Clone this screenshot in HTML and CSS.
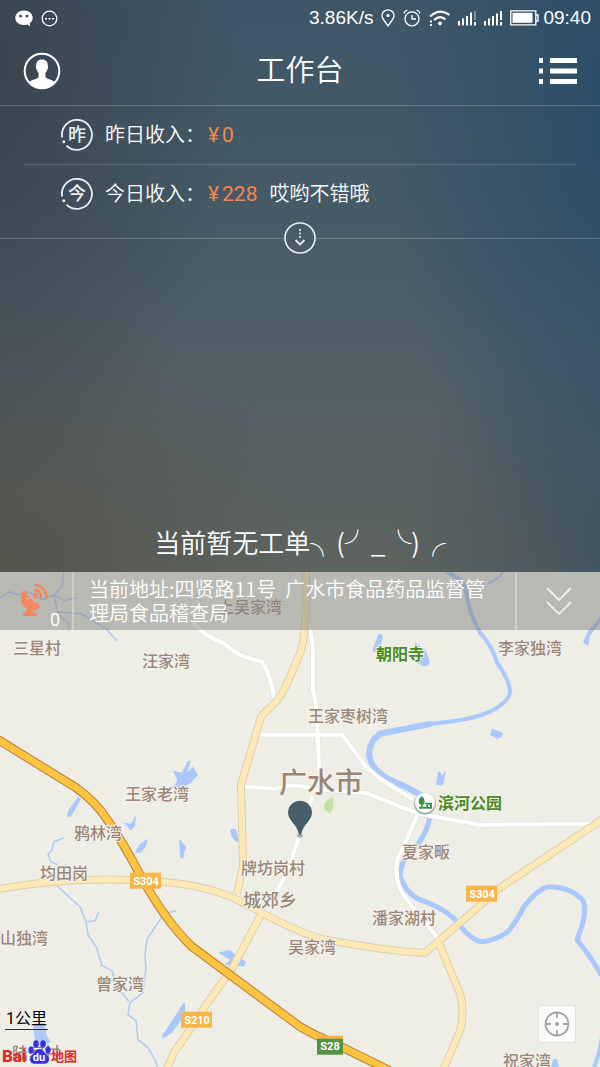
FILE: index.html
```html
<!DOCTYPE html>
<html lang="zh-CN">
<head>
    <meta charset="UTF-8">
    <meta name="viewport" content="width=device-width, initial-scale=1.0">
    <title>工作台</title>
    <link rel="stylesheet" href="styles.css">
</head>
<body>

<main class="workbench">
    <div class="status-bar">
        <div class="status-group">
            <svg width="18" height="17" viewBox="0 0 18 17">
                <path d="M9 0.5C4 .5 .3 3.6.3 7.8S4 15 9 15c1.400 0 2.700-.2 3.800-.6L15 16.500l-.2-3.200c1.800-1.300 2.900-3.300 2.900-5.500C17.700 3.600 14 .5 9 .5z" fill="#fff"/>
                <circle cx="5.600" cy="6" r="1.500" fill="#3d4b56"/>
                <circle cx="12" cy="6" r="1.500" fill="#3d4b56"/>
            </svg>
            <svg width="17" height="17" viewBox="0 0 17 17">
                <circle cx="8.500" cy="8.500" r="7.300" fill="none" stroke="#fff" stroke-width="1.300"/>
                <path d="M4 8h2v1.500H4zM7.500 8h2v1.500h-2zM11 8h2v1.500h-2z" fill="#fff"/>
            </svg>
        </div>
        <div class="status-group">
            <span>3.86K/s</span>
            <svg width="14" height="18" viewBox="0 0 14 18">
                <path d="M7 16.800C4.500 13 1 10 1 6.800a6 6 0 0 1 12 0C13 10 9.500 13 7 16.800z" fill="none" stroke="#fff" stroke-width="1.300"/>
                <circle cx="7" cy="6.500" r="1.600" fill="#fff"/>
            </svg>
            <svg width="18" height="18" viewBox="0 0 18 18">
                <circle cx="9" cy="9.800" r="7" fill="none" stroke="#fff" stroke-width="1.300"/>
                <path d="M9 6v4h4M1 4.500Q1.500 2 4.500 1M17 4.500Q16.500 2 13.500 1" fill="none" stroke="#fff" stroke-width="1.300"/>
            </svg>
            <svg width="21" height="17" viewBox="0 0 21 17">
                <path d="M1 6.500Q11 -2.500 20.500 5M5 10Q11 4.500 16.500 9.500" fill="none" stroke="#fff" stroke-width="2"/>
                <circle cx="11" cy="13.500" r="1.900" fill="#fff"/>
                <path d="M1 10.500h2v2H1zM1 14h2v2H1z" fill="#fff"/>
            </svg>
            <svg width="18" height="16" viewBox="0 0 18 16">
                <path d="M0 11h2v4.500H0zM4 8.500h2v7H4zM8 6h2v9.500H8zM12 2.500h2v13h-2zM16 12h2v3.500h-2z" fill="#fff"/>
                <path d="M16 1h2v9h-2z" fill="#fff" opacity=".35"/>
            </svg>
            <svg width="18" height="16" viewBox="0 0 18 16">
                <path d="M0 11h2v4.500H0zM4 8.500h2v7H4zM8 6h2v9.500H8zM12 3.500h2v12h-2zM16 1h2v9h-2zM16 12h2v3.500h-2z" fill="#fff"/>
            </svg>
            <span class="battery">
                <svg width="29" height="16" viewBox="0 0 29 16">
                    <path d="M.8.800h25v14h-25zM26 5h2v6h-2" fill="none" stroke="#fff" stroke-width="1.300"/>
                    <path d="M2.500 2.800h20v10h-20z" fill="#fff"/>
                </svg>
                09:40
            </span>
        </div>
    </div>

    <header class="header">
        <button class="icon-button" aria-label="个人中心">
            <svg width="38" height="38" viewBox="0 0 38 38">
                <circle cx="19" cy="19" r="17.300" fill="none" stroke="#fff" stroke-width="2"/>
                <path d="M19 7.500c-4 0-6 2.500-5.800 6.500-.7.500-.3 3 .6 3.600.3 1.600.9 2.700 1.800 3.500v4c-1.500 2.300-7 2.600-9.900 5.300A17.500 17.500 0 0 0 32.300 30.400c-2.900-2.700-8.400-3-9.900-5.300v-4c.9-.8 1.500-1.900 1.800-3.500.9-.6 1.300-3.100.6-3.600.2-4-1.800-6.500-5.800-6.500z" fill="#fff"/>
            </svg>
        </button>
        <h1>工作台</h1>
        <button class="icon-button" aria-label="菜单">
            <svg width="38" height="26" viewBox="0 0 38 26">
                <path d="M0 0h4v5H0zM11 0h27v5H11zM0 10.500h4v5H0zM11 10.500h27v5H11zM0 21h4v5H0zM11 21h27v5H11z" fill="#fff"/>
            </svg>
        </button>
    </header>

    <ul class="income">
        <li>
            <svg width="32" height="32" viewBox="0 0 32 32">
                <path d="M1.200 18.500A15 15 0 1 1 5.500 26.600" fill="none" stroke="#e8edf0" stroke-width="1.800"/>
                <circle cx="2.800" cy="22.800" r="1.500" fill="#e8edf0"/>
                <text class="badge-char" x="16" y="22">昨</text>
            </svg>
            <span class="amount">昨日收入：<b>¥</b><b>0</b></span>
        </li>
        <li>
            <svg width="32" height="32" viewBox="0 0 32 32">
                <path d="M1.200 18.500A15 15 0 1 1 5.500 26.600" fill="none" stroke="#e8edf0" stroke-width="1.800"/>
                <circle cx="2.800" cy="22.800" r="1.500" fill="#e8edf0"/>
                <text class="badge-char" x="16" y="22">今</text>
            </svg>
            <span class="amount">今日收入：<b>¥</b><b>228</b></span>
            <span>哎哟不错哦</span>
        </li>
    </ul>

    <div class="expand">
        <button class="icon-button" aria-label="展开">
            <svg width="32" height="32" viewBox="0 0 32 32">
                <circle cx="16" cy="16" r="15" fill="none" stroke="#e8edf0" stroke-width="1.600"/>
                <path d="M16 7v10" stroke="#e8edf0" stroke-width="1.600" stroke-dasharray="2 1.500"/>
                <path d="M11.500 18l4.500 4.500 4.500-4.500" fill="none" stroke="#e8edf0" stroke-width="1.800"/>
            </svg>
        </button>
    </div>

    <p class="empty">当前暂无工单╮(╯_╰)╭</p>
</main>

<section class="map">
    <svg class="map-canvas" viewBox="0 571 600 496" preserveAspectRatio="xMidYMid slice">
        <!-- rivers -->
        <g class="river">
            <path d="M446 571Q465 579 466 590Q468 610 480 632Q492 645 497 662Q510 680 510 692Q508 702 490 711Q470 720 431 723L380 733" stroke-width="4"/>
            <path d="M431 723L380 733Q370 740 369 753Q370 768 388 778Q405 785 422 795" stroke-width="6"/>
            <path d="M430 815Q428 830 417 845Q402 855 400 875Q405 892 420 899Q450 910 460 925Q472 940 482 941Q495 940 508 931Q517 920 524 906Q540 885 551 886Q572 887 583 900Q587 910 581 928L577 939Q590 955 602 975" stroke-width="5"/>
            <path d="M602 1036Q600 1052 594 1067" stroke-width="4"/>
            <path d="M488 583Q500 577 503 571" stroke-width="2"/>
        </g>
        <!-- streams -->
        <g class="stream">
            <path d="M0 597l10-6 8 3 10-3 14 8 12-5 10 6 12-3M64 571l-2 15-8 8 4 20 10 8 1 8M56 611l25 2 25 15 11 12"/>
            <path d="M64 837l-10 4-2 8-4 5 3 7 7 3M57 885l14 13 9 8 6 15 2 13 9 14 5 17 10 5 3 12M87 921l8-1 4-9"/>
            <path d="M176 910l-12 3-4 6-12 18-2 7-1 12 1 12-2 14-1 10-13 10-2 12 8 6 2 19 10 8 7 12 3 9"/>
            <path d="M115 978l6 13 8 10" />
        </g>
        <!-- ponds -->
        <g class="pond">
            <path d="M372 651l6-17q4-2 5 2l-4 15zM415 642l10 7q5 8 4 15q-5 4-13-3z"/>
            <path d="M583 642l5-12 9-9 5-10v8l-12 16-2 10z"/>
            <path d="M170 787q7-4 7-8l-4-9 9 2 6-12 3 0-4 12 6-6 5 8-7 8-10 6z"/>
            <path d="M78 796l3 2-10 18-4 0 1-6zM124 822l7 1 5-9-1 11-4 5zM135 852l5-9 8-5-2 7-5 7zM179 838l8 9-2 2-2 9-3-2zM230 830q5-5 7 2l2 10q-8-3-9-12z"/>
            <path d="M218 952l12-3 5 5 11 7-2 5-11-1-8-1 5-5z"/>
            <path d="M183 1003l2-1 0 12-13 18-9 6-1-3 8-12z"/>
            <path d="M33 1025l11-3 3 14 4 5-8 4-8-5z"/>
            <path d="M492 728l11 4-1 4-5 2-7-4zM438 771l2 0 2 4 4-5-3 15-7-1zM551 1067l2-8 4-1 2 9z"/>
        </g>
        <path class="park" d="M333 796q-10 3-9 12l6 5q5-6 3-17z"/>

        <!-- small roads: casing first, surface on top -->
        <g class="lane-edge">
            <path d="M192 620Q205 637 225 643Q235 655 262 661Q271 675 274 697M305 615Q312 630 313 650L313 690Q317 705 317 720L320 785"/>
            <path d="M259 734H342L365 765L380 778L412 798M244 786L275 788Q290 783 305 786L320 789L365 792L418 813L480 824L590 823"/>
            <path d="M418 813L397 860Q394 885 408 900L438 938M313 795Q300 830 293 855Q287 875 268 905"/>
        </g>
        <g class="lane">
            <path d="M192 620Q205 637 225 643Q235 655 262 661Q271 675 274 697M305 615Q312 630 313 650L313 690Q317 705 317 720L320 785"/>
            <path d="M259 734H342L365 765L380 778L412 798M244 786L275 788Q290 783 305 786L320 789L365 792L418 813L480 824L590 823"/>
            <path d="M418 813L397 860Q394 885 408 900L438 938M313 795Q300 830 293 855Q287 875 268 905"/>
        </g>

        <!-- provincial roads -->
        <g class="road-edge">
            <path d="M306 571Q307 640 299 655Q285 690 277 700L261 716L241 784L243 865L237 893"/>
            <path d="M-5 889Q70 875 145 880Q200 882 235 898L262 912Q290 928 320 938Q390 951 425 952L460 922L500 887L605 817"/>
            <path d="M438 940L460 993Q465 1012 460 1030L443 1070M262 912L232 968L207 1003Q190 1030 175 1050L166 1070"/>
        </g>
        <g class="road">
            <path d="M306 571Q307 640 299 655Q285 690 277 700L261 716L241 784L243 865L237 893"/>
            <path d="M-5 889Q70 875 145 880Q200 882 235 898L262 912Q290 928 320 938Q390 951 425 952L460 922L500 887L605 817"/>
            <path d="M438 940L460 993Q465 1012 460 1030L443 1070M262 912L232 968L207 1003Q190 1030 175 1050L166 1070"/>
        </g>

        <!-- highway -->
        <path class="highway-edge" d="M-5 737L76 787Q95 800 108 820Q125 845 140 874Q165 920 192 946L300 1026Q315 1035 335 1043L390 1070"/>
        <path class="highway" d="M-5 737L76 787Q95 800 108 820Q125 845 140 874Q165 920 192 946L300 1026Q315 1035 335 1043L390 1070"/>

        <g class="shield">
            <rect x="130" y="872" width="31" height="16"/>
            <rect x="466" y="885" width="31" height="16"/>
            <rect x="181" y="1011" width="31" height="16"/>
            <rect class="green" x="317" y="1036" width="26" height="18"/>
            <path d="M317 1035h26v3h-26z"/>
            <text x="146" y="884">S304</text>
            <text x="482" y="897">S304</text>
            <text x="197" y="1023">S210</text>
            <text x="330" y="1049">S28</text>
        </g>

        <g class="place">
            <text x="218" y="612">上吴家湾</text>
            <text x="13" y="653">三星村</text>
            <text x="142" y="666">汪家湾</text>
            <text x="498" y="653">李家独湾</text>
            <text x="308" y="721">王家枣树湾</text>
            <text x="125" y="799">王家老湾</text>
            <text x="74" y="838">鸦林湾</text>
            <text x="40" y="878">均田岗</text>
            <text x="241" y="873">牌坊岗村</text>
            <text x="402" y="857">夏家畈</text>
            <text x="372" y="923">潘家湖村</text>
            <text x="0" y="943">山独湾</text>
            <text x="288" y="952">吴家湾</text>
            <text x="96" y="989">曾家湾</text>
            <text x="12" y="1058">陆家村</text>
            <text x="503" y="1066">祝家湾</text>
            <text class="town" x="243" y="906">城郊乡</text>
            <text class="city" x="279" y="792">广水市</text>
            <text class="scenic" x="376" y="659">朝阳寺</text>
            <text class="scenic" x="438" y="808">滨河公园</text>
        </g>

        <!-- park symbol -->
        <circle cx="425" cy="803" r="11" fill="#a9b3a4"/>
        <circle cx="425" cy="802" r="10" fill="#fff"/>
        <path d="M421.500 795.500c-2.500 1-3.500 6-2 8l1.500.5v2h-2v2h13v-6h-7v1.500h1.500v2.500h-4v-2l1.500-.5c1.500-2 .5-7-2.500-8zM428 804v2h2v-2z" fill="#369347" fill-rule="evenodd"/>

        <!-- current position -->
        <ellipse cx="300" cy="835" rx="3" ry="2" fill="#a9b0ae"/>
        <path d="M300 800a12 12 0 0 0-12 12c0 8 9 11 11 22h2c2-11 11-14 11-22a12 12 0 0 0-12-12z" fill="#465e69"/>
    </svg>

    <div class="address-bar">
        <div class="signal">
            <svg width="28" height="34" viewBox="0 0 28 34">
                <path d="M4 6C-1 12 0 20 7 24.500L5 29H3v3h14v-3h-3l-2-3c4 .5 7-1 8.500-3.500l-8-8z" fill="#f4875b"/>
                <path d="M8 10l8 9M6 15l9-2" fill="none" stroke="#b9b8b4" stroke-width="1.500"/>
                <circle cx="15.500" cy="11.500" r="2.500" fill="#f4875b"/>
                <path d="M14 6q7 0 7 8M15 1q11 1 12 14" fill="none" stroke="#f4875b" stroke-width="2.500"/>
            </svg>
            <span>0</span>
        </div>
        <p class="address">当前地址:四贤路11号&nbsp; 广水市食品药品监督管理局食品稽查局</p>
        <button class="collapse" aria-label="收起">
            <svg width="26" height="28" viewBox="0 0 26 28">
                <path d="M1 1l12 12L25 1M1 15l12 12 12-12" fill="none" stroke="#eeeeec" stroke-width="1.800"/>
            </svg>
        </button>
    </div>

    <div class="map-credit">
        <span class="scale">1公里</span>
        <svg width="76" height="26" viewBox="0 0 76 26">
            <text class="logo-text" x="0" y="23">Bai</text>
            <g fill="#3432dc">
                <ellipse cx="29" cy="11" rx="2.600" ry="3.500"/>
                <ellipse cx="34" cy="5" rx="2.800" ry="3.800"/>
                <ellipse cx="41" cy="5" rx="2.800" ry="3.800"/>
                <ellipse cx="46" cy="11" rx="2.600" ry="3.500"/>
                <path d="M37.500 10c-4 0-5 4-7.500 6s-3 8 1 8.500c3 .4 10 .4 13 0 4-.5 3.500-6.500 1-8.500s-3.500-6-7.500-6z"/>
            </g>
            <text class="logo-du" x="37" y="22">du</text>
            <text class="logo-cn" x="49" y="22">地图</text>
        </svg>
    </div>

    <button class="locate" aria-label="定位">
        <svg width="26" height="26" viewBox="0 0 26 26">
            <circle cx="13" cy="13" r="11.500" fill="none" stroke="#a3a3a3" stroke-width="1.800"/>
            <path d="M13 1v6M13 19v6M1 13h6M19 13h6" stroke="#a3a3a3" stroke-width="1.800"/>
            <circle cx="13" cy="13" r="2" fill="#a3a3a3"/>
        </svg>
    </button>
</section>

</body>
</html>
```
FILE: styles.css
```css
* {
    box-sizing: border-box;
}
body {
    display: flex;
    flex-direction: column;
    min-height: 100vh;
    margin: 0;
    font-family: Roboto, "Noto Sans CJK SC", sans-serif;
    color: #fff;
}
button {
    padding: 0;
    border: none;
    background: none;
    cursor: pointer;
}
svg {
    display: block;
}

/* top panel */
.workbench {
    display: flex;
    flex-direction: column;
    flex: 15 1 0;
    background:
        radial-gradient(ellipse 40% 85% at 105% 20%, #2a4d6a 0%, rgba(42, 77, 106, 0) 100%),
        radial-gradient(ellipse 45% 80% at -5% 10%, #39434c 0%, rgba(57, 67, 76, 0) 100%),
        radial-gradient(ellipse 50% 50% at 0% 100%, #55544d 0%, rgba(85, 84, 77, 0) 100%),
        radial-gradient(ellipse 40% 45% at 105% 100%, #43535d 0%, rgba(67, 83, 93, 0) 100%),
        linear-gradient(to bottom, #405667 0%, #465a66 35%, #526067 65%, #5e645f 100%);
}
.status-bar {
    display: flex;
    justify-content: space-between;
    align-items: center;
    height: 36px;
    padding: 0 9px 0 15px;
    font-family: "Liberation Sans", Arial, sans-serif;
    font-size: 19px;
}
.status-group {
    display: flex;
    align-items: center;
    gap: 8px;
}
.battery {
    display: flex;
    align-items: center;
    gap: 4px;
}
.header {
    display: flex;
    justify-content: space-between;
    align-items: center;
    height: 70px;
    padding: 0 23px;
    border-bottom: 1px solid rgba(255, 255, 255, 0.2);
}
.header h1 {
    margin: 0;
    font-size: 29px;
    font-weight: 350;
    line-height: 40px;
}
.income {
    margin: 0;
    padding: 0 24px;
    list-style: none;
    font-size: 20px;
    font-weight: 350;
}
.income li {
    display: flex;
    align-items: center;
    gap: 12px;
    height: 58px;
    padding-left: 37px;
}
.income li + li {
    border-top: 1px solid rgba(255, 255, 255, 0.16);
}
.income span {
    line-height: 30px;
}
.amount {
    display: flex;
    align-items: baseline;
    gap: 3px;
}
.income b {
    font-size: 21px;
    font-weight: 400;
    color: #f58549;
}
.badge-char {
    font-size: 18px;
    font-weight: 500;
    text-anchor: middle;
    fill: #e8edf0;
}
.expand {
    display: flex;
    align-items: center;
}
.expand::before,
.expand::after {
    content: "";
    flex: 1;
    height: 1px;
    background: rgba(255, 255, 255, 0.2);
}
.empty {
    margin: auto 0 10px;
    text-align: center;
    font-family: "Noto Sans CJK SC", sans-serif;
    font-size: 26px;
    font-weight: 350;
    line-height: 40px;
}

/* map */
.map {
    position: relative;
    flex: 13 1 0;
    overflow: hidden;
    background: #efeee6;
}
.map-canvas {
    position: absolute;
    width: 100%;
    height: 100%;
}
.map-canvas path {
    stroke-linejoin: round;
}
.river path,
.stream path,
.lane path,
.lane-edge path,
.road path,
.road-edge path,
.highway,
.highway-edge {
    fill: none;
}
.river {
    stroke: #a9c8fb;
}
.stream {
    stroke: #b0cbf3;
    stroke-width: 1.5;
}
.pond {
    fill: #a9c8fb;
}
.park {
    fill: #c5e2a0;
}
.lane-edge {
    stroke: #dfded7;
    stroke-width: 5;
}
.lane {
    stroke: #fff;
    stroke-width: 4;
}
.road-edge {
    stroke: #dccfae;
    stroke-width: 8;
}
.road {
    stroke: #fce9b5;
    stroke-width: 6;
}
.highway-edge {
    stroke: #b97c3b;
    stroke-width: 9;
}
.highway {
    stroke: #fdc43f;
    stroke-width: 7;
}
.shield {
    fill: #f7b54a;
}
.shield .green {
    fill: #539343;
}
.shield text {
    fill: #fff;
    font-size: 11px;
    font-weight: 700;
    text-anchor: middle;
}
.place {
    fill: #9a8677;
    stroke: #f4f3ee;
    stroke-width: 2;
    paint-order: stroke;
    font-family: "Noto Sans CJK SC", sans-serif;
    font-size: 16px;
    font-weight: 500;
}
.place .town {
    font-size: 18px;
}
.place .city {
    font-size: 28px;
}
.place .scenic {
    fill: #4b8a1d;
    font-weight: 700;
}

.address-bar {
    position: absolute;
    top: 0;
    left: 0;
    right: 0;
    display: flex;
    min-height: 58px;
    background: rgba(132, 131, 128, 0.5);
}
.signal {
    display: flex;
    align-items: center;
    width: 74px;
    padding-left: 20px;
    border-right: 2px solid rgba(255, 255, 255, 0.3);
}
.signal span {
    align-self: flex-end;
    margin-left: 2px;
    font-size: 18px;
}
.address {
    flex: 1;
    margin: 0;
    padding: 5px 12px 5px 15px;
    font-family: "Noto Sans CJK SC", sans-serif;
    font-size: 20px;
    font-weight: 350;
    line-height: 24px;
}
.collapse {
    display: flex;
    align-items: center;
    justify-content: center;
    width: 85px;
    border-left: 2px solid rgba(255, 255, 255, 0.3);
}
.map-credit {
    position: absolute;
    left: 2px;
    bottom: 2px;
}
.scale {
    display: inline-block;
    margin: 0 0 9px 3px;
    padding: 0 1px;
    border-bottom: 1px solid #333;
    color: #000;
    font-size: 16px;
    line-height: 20px;
}
.logo-text {
    fill: #e02a2b;
    font-size: 17px;
    font-weight: 900;
}
.logo-du {
    fill: #fff;
    font-size: 11px;
    font-weight: 700;
    text-anchor: middle;
}
.logo-cn {
    fill: #e02a2b;
    font-size: 13px;
    font-weight: 700;
}
.locate {
    position: absolute;
    right: 24px;
    bottom: 24px;
    display: flex;
    align-items: center;
    justify-content: center;
    width: 38px;
    height: 38px;
    border: 1px solid #e2e2de;
    background: #fbfbfa;
}
```
